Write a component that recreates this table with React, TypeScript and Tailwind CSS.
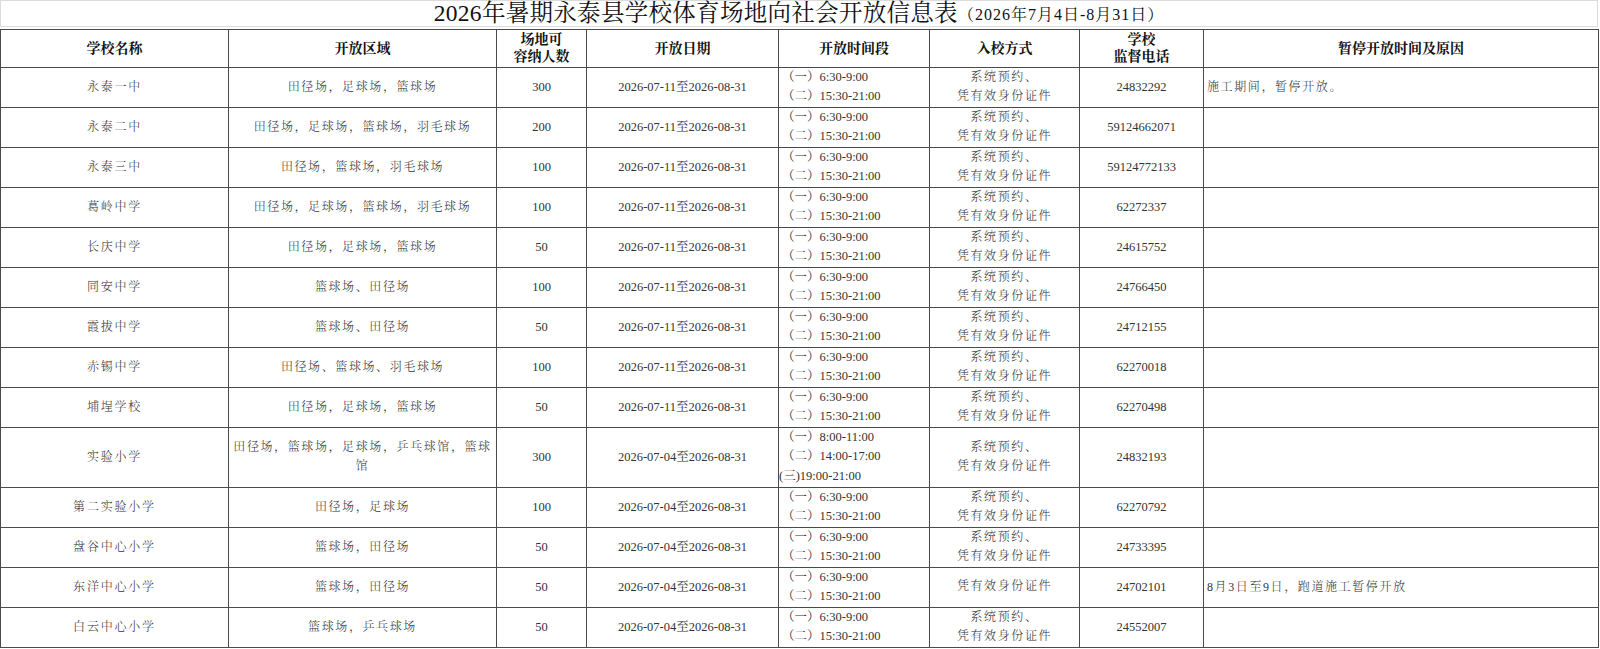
import React from "react";

type Row = {
  name: string;
  area: string;
  cap: string;
  date: string;
  times: string[];
  entry: string[];
  phone: string;
  note: string;
  tall?: boolean;
};

const T2 = ["（一）6:30-9:00", "（二）15:30-21:00"];
const E2 = ["系统预约、", "凭有效身份证件"];
const D1 = "2026-07-11至2026-08-31";
const D2 = "2026-07-04至2026-08-31";

const rows: Row[] = [
  { name: "永泰一中", area: "田径场，足球场，篮球场", cap: "300", date: D1, times: T2, entry: E2, phone: "24832292", note: "施工期间，暂停开放。" },
  { name: "永泰二中", area: "田径场，足球场，篮球场，羽毛球场", cap: "200", date: D1, times: T2, entry: E2, phone: "59124662071", note: "" },
  { name: "永泰三中", area: "田径场，篮球场，羽毛球场", cap: "100", date: D1, times: T2, entry: E2, phone: "59124772133", note: "" },
  { name: "葛岭中学", area: "田径场，足球场，篮球场，羽毛球场", cap: "100", date: D1, times: T2, entry: E2, phone: "62272337", note: "" },
  { name: "长庆中学", area: "田径场，足球场，篮球场", cap: "50", date: D1, times: T2, entry: E2, phone: "24615752", note: "" },
  { name: "同安中学", area: "篮球场、田径场", cap: "100", date: D1, times: T2, entry: E2, phone: "24766450", note: "" },
  { name: "霞拔中学", area: "篮球场、田径场", cap: "50", date: D1, times: T2, entry: E2, phone: "24712155", note: "" },
  { name: "赤锡中学", area: "田径场、篮球场、羽毛球场", cap: "100", date: D1, times: T2, entry: E2, phone: "62270018", note: "" },
  { name: "埔埕学校", area: "田径场，足球场，篮球场", cap: "50", date: D1, times: T2, entry: E2, phone: "62270498", note: "" },
  { name: "实验小学", area: "田径场，篮球场，足球场，乒乓球馆，篮球馆", cap: "300", date: D2, times: ["（一）8:00-11:00", "（二）14:00-17:00", "(三)19:00-21:00"], entry: E2, phone: "24832193", note: "", tall: true },
  { name: "第二实验小学", area: "田径场，足球场", cap: "100", date: D2, times: T2, entry: E2, phone: "62270792", note: "" },
  { name: "盘谷中心小学", area: "篮球场，田径场", cap: "50", date: D2, times: T2, entry: E2, phone: "24733395", note: "" },
  { name: "东洋中心小学", area: "篮球场，田径场", cap: "50", date: D2, times: T2, entry: ["凭有效身份证件"], phone: "24702101", note: "8月3日至9日，跑道施工暂停开放" },
  { name: "白云中心小学", area: "篮球场，乒乓球场", cap: "50", date: D2, times: T2, entry: E2, phone: "24552007", note: "" },
];

const cell = "border border-[#4a4a4a] p-0 align-middle";

export default function App() {
  return (
    <div className="w-[1600px] h-[649px] bg-white font-['Liberation_Serif','Noto_Serif_CJK_SC','Noto_Sans_CJK_SC',serif] text-[#333]">
      <div className="w-[1598px] h-[27px] border border-[#dcdcdc] flex items-end justify-center leading-[25px] mb-[2px]">
        <span className="text-[23.5px] text-[#111] tracking-[0.3px]">2026年暑期永泰县学校体育场地向社会开放信息表</span>
        <span className="text-[16px] text-[#111] leading-[22px] tracking-[1px]">（2026年7月4日-8月31日）</span>
      </div>
      <table className="w-[1598px] table-fixed border-collapse">
        <colgroup>
          <col className="w-[228px]" />
          <col className="w-[268px]" />
          <col className="w-[90px]" />
          <col className="w-[192px]" />
          <col className="w-[151px]" />
          <col className="w-[150px]" />
          <col className="w-[124px]" />
          <col className="w-[395px]" />
        </colgroup>
        <thead>
          <tr className="h-[37.5px] text-[14px] font-bold text-[#111] leading-[17px]">
            <th className={cell}>学校名称</th>
            <th className={cell}>开放区域</th>
            <th className={cell}>场地可<br />容纳人数</th>
            <th className={cell}>开放日期</th>
            <th className={cell}>开放时间段</th>
            <th className={cell}>入校方式</th>
            <th className={cell}>学校<br />监督电话</th>
            <th className={cell}>暂停开放时间及原因</th>
          </tr>
        </thead>
        <tbody>
          {rows.map((r) => (
            <tr key={r.name} className={r.tall ? "h-[60px]" : "h-[39.85px]"}>
              <td className={`${cell} text-center text-[12px] tracking-[1.8px] font-light`}>{r.name}</td>
              <td className={`${cell} text-center text-[12px] tracking-[1.6px] font-light leading-[19px] px-[1px]`}>{r.area}</td>
              <td className={`${cell} text-center text-[12.5px]`}>{r.cap}</td>
              <td className={`${cell} text-center text-[12.5px]`}>{r.date}</td>
              <td className={`${cell} text-left text-[12.5px] leading-[19.5px] pl-[3px]`}>
                {r.times.map((t) => (
                  <div key={t} className={`whitespace-nowrap ${t.startsWith("(") ? "-ml-[3px]" : ""}`}>{t}</div>
                ))}
              </td>
              <td className={`${cell} text-center text-[12px] tracking-[1.6px] font-light leading-[19.5px]`}>
                {r.entry.map((e) => (
                  <div key={e}>{e}</div>
                ))}
              </td>
              <td className={`${cell} text-center text-[12.5px]`}>{r.phone}</td>
              <td className={`${cell} text-left text-[12px] tracking-[1.6px] font-light pl-[3px]`}>{r.note}</td>
            </tr>
          ))}
        </tbody>
      </table>
    </div>
  );
}
